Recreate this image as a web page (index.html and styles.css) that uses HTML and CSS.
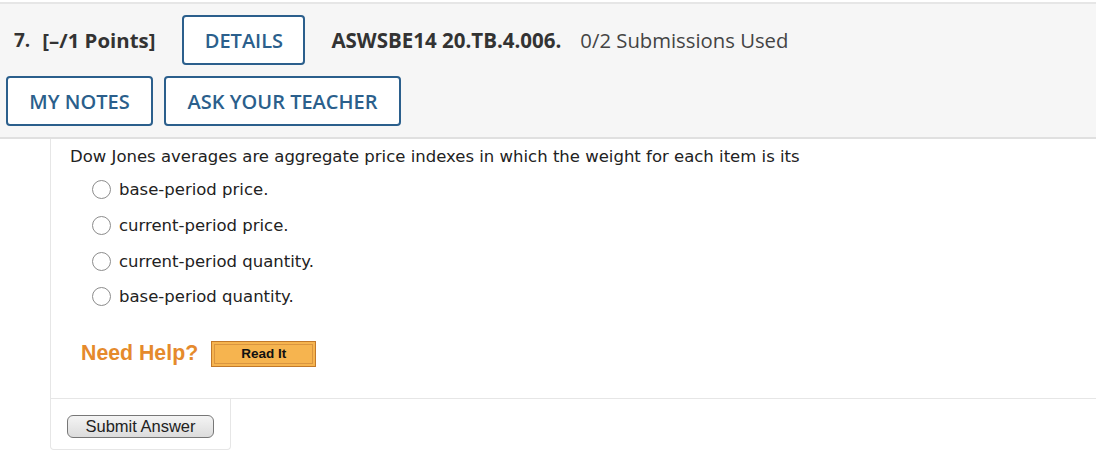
FILE: index.html
```html
<!DOCTYPE html>
<html>
<head>
<meta charset="utf-8">
<link rel="stylesheet" href="styles.css">
</head>
<body>
<div class="header">
  <div class="row row1">
    <span class="num">7.</span>
    <span class="points">[–/1 Points]</span>
    <span class="btn details">DETAILS</span>
    <span class="code">ASWSBE14 20.TB.4.006.</span>
    <span class="subs">0/2 Submissions Used</span>
  </div>
  <div class="row row2">
    <span class="btn notes">MY NOTES</span>
    <span class="btn teacher">ASK YOUR TEACHER</span>
  </div>
</div>
<div class="content">
  <div class="question">
    <p class="prompt">Dow Jones averages are aggregate price indexes in which the weight for each item is its</p>
    <ul class="options">
      <li><span class="radio"></span>base-period price.</li>
      <li><span class="radio"></span>current-period price.</li>
      <li><span class="radio"></span>current-period quantity.</li>
      <li><span class="radio"></span>base-period quantity.</li>
    </ul>
    <div class="help">
      <span class="need">Need Help?</span>
      <span class="readit"><span class="readit-inner">Read It</span></span>
    </div>
  </div>
  <div class="submit-box">
    <span class="submit">Submit Answer</span>
  </div>
</div>
</body>
</html>
```
FILE: styles.css
```css
body {
  margin: 0;
  background: #ffffff;
}
.header {
  margin-top: 2px;
  border-top: 2px solid #e6e6e6;
  border-bottom: 2px solid #e0e0e0;
  background: #f6f6f6;
  padding: 11px 0 11px 6px;
  font-family: "Open Sans", sans-serif;
  color: #333333;
}
.row {
  display: flex;
  align-items: center;
}
.row1 {
  height: 50px;
}
.row2 {
  margin-top: 11px;
  height: 50px;
  gap: 11px;
}
.num {
  margin-left: 8px;
  font-weight: 700;
  font-size: 19px;
  margin-right: 12px;
}
.points {
  font-weight: 700;
  font-size: 20.4px;
  margin-right: 27px;
}
.btn {
  box-sizing: border-box;
  height: 50px;
  display: inline-flex;
  align-items: center;
  justify-content: center;
  border: 2px solid #2b5f8c;
  border-radius: 4px;
  background: #ffffff;
  color: #2b5f8c;
  font-size: 20px;
  font-weight: 600;
}
.details {
  width: 123px;
  margin-right: 26px;
}
.notes {
  width: 147px;
}
.teacher {
  width: 237px;
}
.code {
  font-weight: 700;
  font-size: 20.5px;
  margin-right: 19px;
}
.subs {
  font-size: 20.3px;
  color: #444444;
}
.content {
  margin-left: 50px;
}
.question {
  border-left: 1px solid #e6e6e6;
  border-bottom: 1px solid #e6e6e6;
  padding: 7px 0 31px 19px;
  font-family: "DejaVu Sans", Verdana, sans-serif;
  font-size: 16.5px;
  color: #222222;
}
.prompt {
  margin: 0 0 4px 0;
  line-height: 22px;
}
.options {
  list-style: none;
  margin: 0;
  padding: 0 0 0 22px;
}
.options li {
  display: flex;
  align-items: center;
  height: 35.7px;
}
.radio {
  box-sizing: border-box;
  width: 19px;
  height: 19px;
  border: 1.5px solid #8c8c8c;
  border-radius: 50%;
  background: #ffffff;
  margin-right: 8px;
}
.help {
  display: flex;
  align-items: center;
  margin-top: 26px;
  padding-left: 11px;
}
.need {
  font-family: "Liberation Sans", Arial, sans-serif;
  font-weight: 700;
  font-size: 21.3px;
  color: #e58a2c;
  margin-right: 13px;
}
.readit {
  box-sizing: border-box;
  width: 105px;
  height: 26px;
  border: 1px solid #c2792a;
  background: #f6b44f;
  padding: 2px;
  display: inline-flex;
}
.readit-inner {
  flex: 1;
  border: 1px solid #d99540;
  display: flex;
  align-items: center;
  justify-content: center;
  font-family: "Liberation Sans", Arial, sans-serif;
  font-weight: 700;
  font-size: 13.5px;
  color: #111111;
}
.submit-box {
  box-sizing: border-box;
  width: 181px;
  border: 1px solid #e6e6e6;
  border-top: none;
  border-radius: 0 0 4px 4px;
  padding: 16px 0 11px 16px;
}
.submit {
  box-sizing: border-box;
  display: inline-flex;
  align-items: center;
  justify-content: center;
  width: 147px;
  height: 23px;
  border: 1px solid #777777;
  border-radius: 6px;
  background: linear-gradient(#f4f4f4, #dcdcdc);
  font-family: "Liberation Sans", Arial, sans-serif;
  font-size: 16.5px;
  color: #222222;
}
```
